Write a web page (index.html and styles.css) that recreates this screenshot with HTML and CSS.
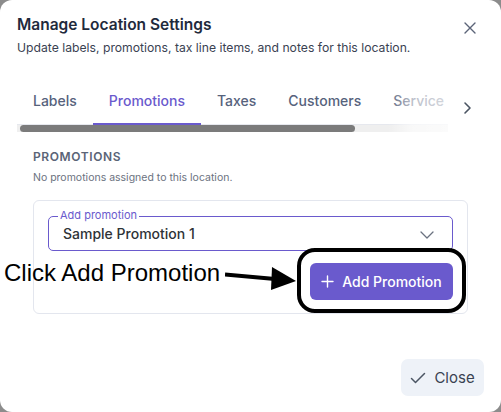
FILE: index.html
```html
<!DOCTYPE html>
<html>
<head>
<meta charset="utf-8">
<link rel="stylesheet" href="styles.css">
</head>
<body>
<div class="dialog">
  <div class="header">
    <div class="titles">
      <h2 class="title">Manage Location Settings</h2>
      <p class="subtitle">Update labels, promotions, tax line items, and notes for this location.</p>
    </div>
    <button class="icon-btn close-x" aria-label="Close">
      <svg width="12" height="12" viewBox="0 0 12 12"><path d="M1 1L11 11M11 1L1 11" stroke="#5b6478" stroke-width="1.4" stroke-linecap="round" fill="none"/></svg>
    </button>
  </div>

  <div class="tabs-row">
    <div class="tabs-wrap">
      <div class="tabs">
        <div class="tab">Labels</div>
        <div class="tab active">Promotions</div>
        <div class="tab">Taxes</div>
        <div class="tab">Customers</div>
        <div class="tab">Service</div>
      </div>
      <div class="scrollbar"><div class="thumb"></div></div>
      <div class="fade"></div>
    </div>
    <button class="icon-btn tab-next" aria-label="Next">
      <svg width="10" height="14" viewBox="0 0 10 14"><path d="M3 2L8 7L3 12" stroke="#4b5563" stroke-width="1.6" stroke-linecap="round" stroke-linejoin="round" fill="none"/></svg>
    </button>
  </div>

  <div class="content">
    <div class="section-label">PROMOTIONS</div>
    <div class="section-note">No promotions assigned to this location.</div>
    <div class="card">
      <div class="select">
        <span class="legend">Add promotion</span>
        <span class="select-value">Sample Promotion 1</span>
        <svg class="select-chev" width="14" height="8" viewBox="0 0 14 8"><path d="M1 1L7 7L13 1" stroke="#6b7280" stroke-width="1.3" stroke-linecap="round" stroke-linejoin="round" fill="none"/></svg>
      </div>
      <div class="card-actions">
        <button class="primary-btn">
          <svg width="13" height="13" viewBox="0 0 13 13"><path d="M6.5 1V12M1 6.5H12" stroke="#ffffff" stroke-width="1.4" stroke-linecap="round" fill="none"/></svg>
          <span>Add Promotion</span>
        </button>
      </div>
    </div>
  </div>

  <div class="footer">
    <button class="close-btn">
      <svg width="16" height="12" viewBox="0 0 16 12"><path d="M1.5 6.5L5.5 10.5L14.5 1.5" stroke="#4b5563" stroke-width="1.5" stroke-linecap="round" stroke-linejoin="round" fill="none"/></svg>
      <span>Close</span>
    </button>
  </div>

  <div class="annot-text">Click Add Promotion</div>
  <svg class="annot-arrow" width="76" height="26" viewBox="0 0 76 26">
    <path d="M0 7.5L50 12" stroke="#000" stroke-width="4" fill="none"/>
    <path d="M47 0L71 14L46 23Z" fill="#000"/>
  </svg>
  <div class="annot-box"></div>
</div>
</body>
</html>
```

FILE: styles.css
```css
* { box-sizing: border-box; }
html, body { margin: 0; padding: 0; }
body {
  background: #8c8c8c;
  font-family: Inter, "Noto Sans", sans-serif;
  width: 501px;
  height: 412px;
  overflow: hidden;
}
button { font-family: inherit; border: none; background: none; padding: 0; cursor: pointer; }

.dialog {
  position: relative;
  width: 501px;
  height: 412px;
  background: #ffffff;
  border-radius: 12px;
  display: flex;
  flex-direction: column;
  overflow: hidden;
}

.header {
  display: flex;
  justify-content: space-between;
  align-items: flex-start;
  padding: 15px 24px 0 17px;
}
.title {
  margin: 0;
  font-size: 15.5px;
  line-height: 20px;
  font-weight: 600;
  color: #1f2a3c;
}
.subtitle {
  margin: 5px 0 0;
  font-size: 12.2px;
  line-height: 16px;
  color: #3a4252;
}
.close-x {
  margin-top: 6px;
  width: 14px;
  height: 14px;
  display: flex;
  align-items: center;
  justify-content: center;
}

.tabs-row {
  display: flex;
  align-items: flex-start;
  margin-top: 21px;
  padding-left: 17px;
}
.tabs-wrap {
  position: relative;
  width: 431px;
  overflow: hidden;
}
.tabs {
  display: flex;
  height: 48px;
  border-bottom: 1px solid #e6e8ee;
  white-space: nowrap;
}
.tab {
  padding: 0 16px;
  font-size: 14px;
  font-weight: 500;
  color: #56627c;
  display: flex;
  align-items: center;
  border-bottom: 2px solid transparent;
  margin-bottom: -1px;
  flex-shrink: 0;
}
.tab.active {
  color: #6a5acd;
  border-bottom-color: #6a5acd;
}
.scrollbar {
  height: 7px;
  background: #efefef;
  position: relative;
}
.thumb {
  position: absolute;
  left: 3px;
  top: 0;
  width: 335px;
  height: 7px;
  background: #7b7b7b;
  border-radius: 4px;
}
.fade {
  position: absolute;
  right: 0;
  top: 0;
  width: 60px;
  height: 56px;
  background: linear-gradient(to right, rgba(255,255,255,0), rgba(255,255,255,0.6) 40%, rgba(255,255,255,0.75));
}
.tab-next {
  margin-left: 14px;
  margin-top: 24px;
  width: 10px;
  height: 14px;
  display: flex;
}

.content {
  padding: 17px 33px 0;
}
.section-label {
  font-size: 12px;
  line-height: 16px;
  font-weight: 600;
  letter-spacing: 0.6px;
  color: #5a6477;
}
.section-note {
  margin-top: 6px;
  font-size: 10.5px;
  line-height: 14px;
  color: #6b7280;
}
.card {
  margin-top: 15px;
  border: 1px solid #e3e6ee;
  border-radius: 6px;
  padding: 15px 14px 13px;
}
.select {
  position: relative;
  height: 35px;
  border: 1px solid #6a5acd;
  border-radius: 5px;
  display: flex;
  align-items: center;
  padding: 0 14px;
  justify-content: space-between;
}
.legend {
  position: absolute;
  left: 9px;
  top: -8px;
  padding: 0 2px;
  background: #ffffff;
  font-size: 11px;
  line-height: 13px;
  color: #6a5acd;
}
.select-value {
  font-size: 14px;
  color: #2f3337;
  font-weight: 500;
}
.select-chev { margin-right: 4px; margin-top: 2px; }
.card-actions {
  display: flex;
  justify-content: flex-end;
  margin-top: 12px;
}
.primary-btn {
  width: 143px;
  height: 37px;
  background: #6a5acd;
  border-radius: 6px;
  color: #ffffff;
  font-size: 14px;
  font-weight: 500;
  display: flex;
  align-items: center;
  justify-content: center;
  gap: 8px;
}

.footer {
  margin-top: auto;
  display: flex;
  justify-content: flex-end;
  padding: 0 17px 16px;
}
.close-btn {
  width: 83px;
  height: 37px;
  background: #eef2f8;
  border-radius: 7px;
  color: #3a4252;
  font-size: 15px;
  display: flex;
  align-items: center;
  justify-content: center;
  gap: 8px;
}

.annot-text {
  position: absolute;
  left: 4px;
  top: 259px;
  font-family: "Liberation Sans", Arial, sans-serif;
  font-size: 24px;
  line-height: 28px;
  color: #000;
}
.annot-arrow {
  position: absolute;
  left: 225px;
  top: 267px;
}
.annot-box {
  position: absolute;
  left: 297px;
  top: 248px;
  width: 169px;
  height: 65px;
  border: 4px solid #000;
  border-radius: 18px;
}
```
